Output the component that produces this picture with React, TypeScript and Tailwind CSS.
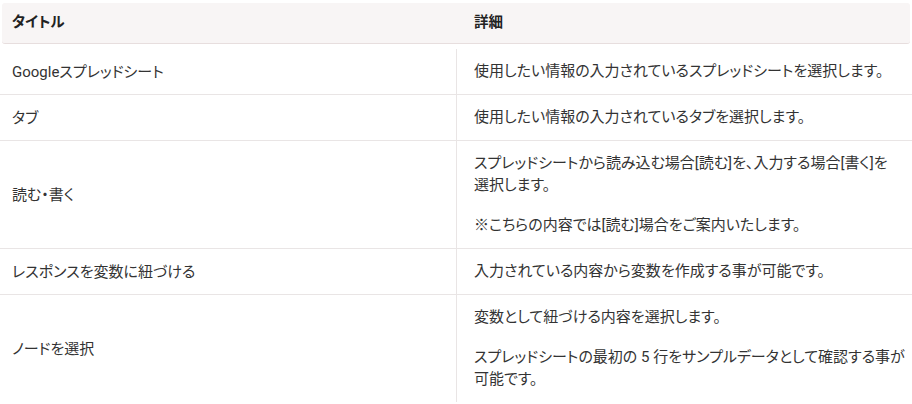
import React from "react";

const rows: { title: string; details: React.ReactNode[] }[] = [
  { title: "Googleスプレッドシート", details: ["使用したい情報の入力されているスプレッドシートを選択します。"] },
  { title: "タブ", details: ["使用したい情報の入力されているタブを選択します。"] },
  {
    title: "読む・書く",
    details: [
      <>
        スプレッドシートから読み込む場合[読む]を、入力する場合[書く]を
        <br />
        選択します。
      </>,
      "※こちらの内容では[読む]場合をご案内いたします。",
    ],
  },
  { title: "レスポンスを変数に紐づける", details: ["入力されている内容から変数を作成する事が可能です。"] },
  {
    title: "ノードを選択",
    details: [
      "変数として紐づける内容を選択します。",
      <>
        スプレッドシートの最初の 5 行をサンプルデータとして確認する事が
        <br />
        可能です。
      </>,
    ],
  },
];

export default function App() {
  return (
    <div
      className="w-[912px] h-[404px] overflow-hidden bg-white text-[#333333] text-[15px] leading-[22px] [font-feature-settings:'palt']"
      style={{ fontFamily: 'Roboto, "Noto Sans CJK JP", sans-serif' }}
    >
      <div className="mx-[2px] mt-[3px] h-[41px] grid grid-cols-[454px_1fr] items-center bg-[#f8f5f5] border-b border-[#e7dede] rounded-[3px] font-bold text-[#222222] text-[14.5px]">
        <div className="pl-[10px]">タイトル</div>
        <div className="pl-[18px]">詳細</div>
      </div>
      <div className="mt-[5px] grid grid-cols-[456px_1fr]">
        {rows.map((r, i) => (
          <React.Fragment key={i}>
            <div
              className={`flex items-center pl-[12px] ${i < rows.length - 1 ? "border-b border-[#e9e5e5]" : ""}`}
            >
              {r.title}
            </div>
            <div
              className={`border-l border-[#e9e5e5] pl-[17px] pr-[8px] pt-[11px] pb-[12px] flex flex-col gap-[18px] ${
                i < rows.length - 1 ? "border-b" : ""
              }`}
            >
              {r.details.map((d, j) => (
                <p key={j} className="whitespace-nowrap">
                  {d}
                </p>
              ))}
            </div>
          </React.Fragment>
        ))}
      </div>
    </div>
  );
}
